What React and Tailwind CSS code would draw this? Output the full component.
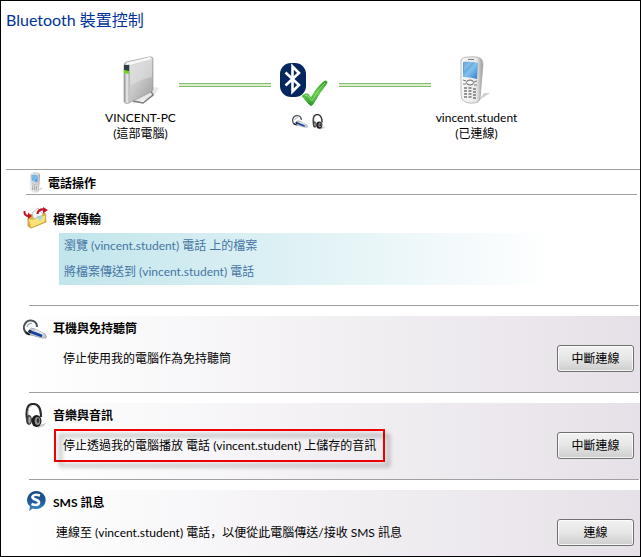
import React from "react";

const fontStack = "font-['Lato','Noto_Sans_CJK_TC',sans-serif]";

const DriveIcon = () => (
  <svg viewBox="0 0 42 50" className="w-[42px] h-[50px]" aria-hidden="true">
    <defs>
      <linearGradient id="driveFront" x1="0" y1="0" x2="1" y2="1">
        <stop offset="0" stopColor="#dedede" />
        <stop offset="0.5" stopColor="#c9c9c9" />
        <stop offset="1" stopColor="#9c9c9c" />
      </linearGradient>
      <linearGradient id="driveSide" x1="0" y1="0" x2="1" y2="0">
        <stop offset="0" stopColor="#8e8e8e" />
        <stop offset="0.5" stopColor="#ededed" />
        <stop offset="1" stopColor="#a0a0a0" />
      </linearGradient>
    </defs>
    <path d="M14 46 L34 32 L40 33 L34 42 L14 49 Z" fill="#e8e8e8" />
    <path d="M14 46 L24 48 L34 40 L32 36" fill="none" stroke="#7b7b7b" strokeWidth="1.5" />
    <path d="M5 10 Q5 8 7 7 L30 2 Q34 1 34 4 L34 34 Q34 36 32 37 L10 48 Q6 50 5 46 Z" fill="url(#driveFront)" stroke="#909090" strokeWidth="0.6" />
    <path d="M5 10 Q5 8 7 8 L11 10 L10 47 Q6 50 5 46 Z" fill="url(#driveSide)" />
    <path d="M11 11 L33 4 L33 22 Q22 24 11 31 Z" fill="#e9e9e9" opacity="0.45" />
    <path d="M7 8 L31 2 L33 4 L11 10 Z" fill="#f8f8f8" />
    <path d="M5 10 L10 10 L10 17 L5 16 Z" fill="#333c40" />
    <path d="M5 15 L10 16 L10 19 L5 18 Z" fill="#69dc10" />
  </svg>
);

const PhoneIcon = ({ className }) => (
  <svg viewBox="0 0 32 50" className={className} aria-hidden="true">
    <defs>
      <linearGradient id="phoneBody" x1="0" y1="0" x2="1" y2="0">
        <stop offset="0" stopColor="#f9f9f9" />
        <stop offset="0.7" stopColor="#e8e8ea" />
        <stop offset="1" stopColor="#999" />
      </linearGradient>
      <linearGradient id="phoneScreen" x1="0" y1="0" x2="1" y2="1">
        <stop offset="0" stopColor="#2b78bd" />
        <stop offset="0.5" stopColor="#83c1ee" />
        <stop offset="1" stopColor="#2e7cc6" />
      </linearGradient>
    </defs>
    <path d="M15 48 L30 38 L24 38 L20 44 Z" fill="#d0d0d0" />
    <path d="M1 5 Q2 2 9 2 Q20 1 22 5 L23 9 L20 44 Q19 48 14 48 Q6 49 2 44 Q1 42 1 34 Z" fill="url(#phoneBody)" stroke="#aaa" strokeWidth="0.8" />
    <path d="M8 4.5 H14" stroke="#777" />
    <path d="M3 7 Q10 6 18 8 L17 24 Q10 22 3 22 Z" fill="url(#phoneScreen)" />
    <path d="M3 7 L13 7 L4 16 Z" fill="#d8effb" opacity="0.35" />
    <ellipse cx="10" cy="27.500" rx="3.500" ry="2.500" fill="#f5f5f5" stroke="#666" />
    <path d="M3 25 L6 26 M14 27 L17 26 M3 29 L6 29 M14 30 L17 30" stroke="#777" />
    <path d="M4 33 h3 M8.500 33 h3 M13 34 h3 M4 36 h3 M8.500 36 h3 M13 37 h3 M4 39 h3 M8.500 39 h3 M13 40 h3 M4 42 h3 M8.500 42 h3 M13 43 h3" stroke="#777" strokeWidth="1.600" />
  </svg>
);

const BluetoothIcon = () => (
  <svg viewBox="0 0 50 46" className="w-[50px] h-[46px]" aria-hidden="true">
    <defs>
      <linearGradient id="checkGreen" x1="0" y1="0" x2="0" y2="1">
        <stop offset="0" stopColor="#2f9a2a" />
        <stop offset="0.5" stopColor="#65cc50" />
        <stop offset="1" stopColor="#2d9b2c" />
      </linearGradient>
    </defs>
    <rect x="0" y="1" width="26" height="34" rx="11" fill="#06265e" />
    <path d="M5.500 10.500 L19 23 L12.500 29.500 V4.500 L19 11 L5.500 23.500" fill="none" stroke="#fff" strokeWidth="2.600" />
    <path d="M22 34 Q25 31 28 32 L31 36 Q36 26 44 19.500 Q47 18 47 21 Q40 30 33 42 Q31 45 29 42 Z" fill="url(#checkGreen)" stroke="url(#checkGreen)" strokeWidth="1" />
    <path d="M25 33 L28 34 L32 39 Q37 28 45 21" fill="none" stroke="#8ede78" strokeWidth="1" />
  </svg>
);

const EarpieceIcon = ({ className }) => (
  <svg viewBox="0 0 24 22" className={className} aria-hidden="true">
    <path d="M4 15 Q0 11 1 7 Q3 1 8 1.500 Q14 2 14 8" fill="none" stroke="#4d535c" strokeWidth="2" />
    <path d="M4 8 Q5 4 9 4.500" fill="none" stroke="#a2a7ae" strokeWidth="1.200" />
    <path d="M3 13 Q5 16 8 15" fill="none" stroke="#222" strokeWidth="2" />
    <path d="M6 11 Q8 8 12 10 L22 15 Q24 17 23 19 L19 19 L8 16 Q5 14 6 11 Z" fill="#c5ccd6" stroke="#8d949e" strokeWidth="0.700" />
    <path d="M8 13 L19 17" stroke="#153f9e" strokeWidth="2.400" />
    <path d="M12 11 L20 15" stroke="#f5f7fa" strokeWidth="1.200" />
    <circle cx="7" cy="12.500" r="1.800" fill="#21304e" />
  </svg>
);

const HeadphonesIcon = ({ className }) => (
  <svg viewBox="0 0 24 26" className={className} aria-hidden="true">
    <path d="M12 23 L22 20 L20 23 L14 25 Z" fill="#ccc" />
    <path d="M3 16 Q1 2 8 1 Q17 0 17 14" fill="none" stroke="#2b2b2b" strokeWidth="2.200" />
    <path d="M4.500 14 Q3 3 8 2.500" fill="none" stroke="#aaa" strokeWidth="0.800" />
    <ellipse cx="5" cy="17" rx="3" ry="5" fill="#3e3e3e" />
    <ellipse cx="5.500" cy="17" rx="1.200" ry="3.500" fill="#aaa" />
    <ellipse cx="12.500" cy="18" rx="5" ry="6" fill="#1c1c1c" />
    <ellipse cx="13.500" cy="18" rx="2.800" ry="4" fill="#8f8f8f" />
    <ellipse cx="14" cy="17.500" rx="1.200" ry="2.500" fill="#303030" />
  </svg>
);

const FolderIcon = () => (
  <svg viewBox="0 0 26 22" className="w-[26px] h-[22px]" aria-hidden="true">
    <path d="M5 9 L10 7 L12 8 L22 6 L23 15 L8 21 L5 19 Z" fill="#e5b936" stroke="#b58b25" strokeWidth="0.700" />
    <path d="M9 6 L15 1 L20 7 L17 14 L11 13 Z" fill="#f4f6fa" stroke="#a9afba" strokeWidth="0.700" />
    <path d="M5 12 L12 12 L14 10 L23 8 L22 15 L8 21 Z" fill="#fbe17b" stroke="#c99c2c" strokeWidth="0.700" />
    <path d="M13 10 L20 9 L17 14 Z" fill="#9bd7ee" />
    <path d="M1.500 4 Q1 9 6 9" fill="none" stroke="#c3162b" strokeWidth="2" />
    <path d="M5 5.500 L9 9 L5 12 Z" fill="#c3162b" />
    <path d="M14.500 7 Q15 2 21 2.500" fill="none" stroke="#c3162b" strokeWidth="2.200" />
    <path d="M20 0 L25 3 L20 6.500 Z" fill="#c3162b" />
  </svg>
);

const SmsIcon = () => (
  <svg viewBox="0 0 22 22" className="ml-[2px] w-[22px] h-[22px]" aria-hidden="true">
    <defs>
      <linearGradient id="smsBlue" x1="0" y1="0" x2="0" y2="1">
        <stop offset="0" stopColor="#164783" />
        <stop offset="0.6" stopColor="#235f9f" />
        <stop offset="1" stopColor="#438fcc" />
      </linearGradient>
    </defs>
    <path d="M11 1 A9.500 9 0 1 1 8 18.500 L4 21 L5 16.500 A9.500 9 0 0 1 11 1 Z" fill="url(#smsBlue)" />
    <path d="M15 5.500 Q9 3.500 7.500 6.500 Q7 8.500 11 9.800 Q15.500 11.500 13.500 14 Q11.500 16 6.500 14" fill="none" stroke="#fff" strokeWidth="2.600" />
  </svg>
);

const GreenLine = () => (
  <div className="w-[92px] mt-[34px] h-1 border-y border-[#86ba72] bg-[#d9efc9]" />
);

const Device = ({ icon, name, status }) => (
  <div className="flex flex-col items-center whitespace-nowrap leading-4">
    <div className="h-[61px] flex items-center">{icon}</div>
    <span>{name}</span>
    <span>{status}</span>
  </div>
);

const Service = ({ icon, title, text, action, indent = "pl-[10px]", highlighted, last }) => (
  <section>
    <div
      className={`ml-[22px] flex bg-linear-to-r from-white to-[#e6e1e8] ${
        last ? "pb-[7px]" : "pb-[17px]"
      }`}
    >
      <div className="w-[30px] shrink-0">{icon}</div>
      <div className="flex-1">
        <h2 className="h-[26px] leading-[26px] font-bold">{title}</h2>
        <div className="h-[33px] flex items-center justify-between pr-[6px]">
          {highlighted ? (
            <p className="relative isolate ml-px h-[33px] px-[7px] border-2 border-[#f40000] leading-[29px]">
              {/* Drop shadow of the frame */}
              <span className="absolute -z-10 top-[3px] left-[3px] -right-[7px] -bottom-[7px] border-[3px] border-black/25 blur-[2px]" />
              {text}
            </p>
          ) : (
            <p className={indent}>{text}</p>
          )}
          <button
            type="button"
            className="w-[77px] h-[27px] rounded-[3px] border border-[#707070] bg-linear-to-b from-[#f2f2f2] from-0% via-[#e6e6e6] via-50% to-[#cdcdcd] inset-ring inset-ring-white/80"
          >
            {action}
          </button>
        </div>
      </div>
    </div>
    {!last && <div className="ml-7 mr-px mb-[10px] h-px bg-[#a0a0a0]" />}
  </section>
);

const App = () => {
  return (
    <main className={`${fontStack} border border-black bg-white text-black text-[12px]`}>
      <h1 className="pl-[5px] pt-[7px] text-[16px] leading-6 text-[#003399]">
        Bluetooth 裝置控制
      </h1>

      {/* Connection diagram */}
      <div className="flex justify-center pt-[17px] pr-4 h-[137px]">
        <div className="w-[76px] flex justify-center">
          <Device icon={<DriveIcon />} name="VINCENT-PC" status="(這部電腦)" />
        </div>
        <GreenLine />
        <div className="w-[68px] flex flex-col items-center pt-[13px]">
          <BluetoothIcon />
          <div className="flex gap-[3px] pt-[6px] pl-[9px]">
            <EarpieceIcon className="w-4 h-4" />
            <HeadphonesIcon className="w-4 h-4" />
          </div>
        </div>
        <GreenLine />
        <div className="w-[92px] flex justify-center">
          <Device
            icon={<PhoneIcon className="w-[32px] h-[50px]" />}
            name="vincent.student"
            status="(已連線)"
          />
        </div>
      </div>

      {/* Phone operations */}
      <div className="ml-[5px] h-px bg-[#a0a0a0]" />
      <div className="ml-[25px] mr-[3px] h-[25px] flex items-center gap-[4px] pl-[4px] border-b border-[#a0a0a0]">
        <PhoneIcon className="w-[14px] h-[21px]" />
        <h2 className="pt-1 font-bold">電話操作</h2>
      </div>

      <section className="pt-3">
        <div className="ml-[22px] flex pb-5">
          <div className="w-[30px] shrink-0">
            <FolderIcon />
          </div>
          <div className="flex-1">
            <h2 className="h-[26px] leading-[26px] font-bold">檔案傳輸</h2>
            <div className="ml-[6px] flex flex-col items-start pl-[5px] leading-[26px] text-[#4675a3] bg-linear-to-r from-[#c1e5ec] to-white to-85%">
              <a href="#browse">瀏覽 (vincent.student) 電話 上的檔案</a>
              <a href="#send">將檔案傳送到 (vincent.student) 電話</a>
            </div>
          </div>
        </div>
        <div className="ml-7 mr-px mb-[10px] h-px bg-[#a0a0a0]" />
      </section>

      <Service
        icon={<EarpieceIcon className="mt-[3px] w-6 h-[22px]" />}
        title="耳機與免持聽筒"
        text="停止使用我的電腦作為免持聽筒"
        action="中斷連線"
      />
      <Service
        icon={<HeadphonesIcon className="ml-px w-6 h-[26px]" />}
        title="音樂與音訊"
        text="停止透過我的電腦播放 電話 (vincent.student) 上儲存的音訊"
        action="中斷連線"
        highlighted
      />
      <Service
        icon={<SmsIcon />}
        title="SMS 訊息"
        text={
          <>
            連線至 (vincent.student) 電話
            <span className="font-['Noto_Sans_CJK_SC',sans-serif]">，</span>
            以便從此電腦傳送/接收 SMS 訊息
          </>
        }
        action="連線"
        indent="pl-[3px]"
        last
      />
    </main>
  );
};

export default App;
